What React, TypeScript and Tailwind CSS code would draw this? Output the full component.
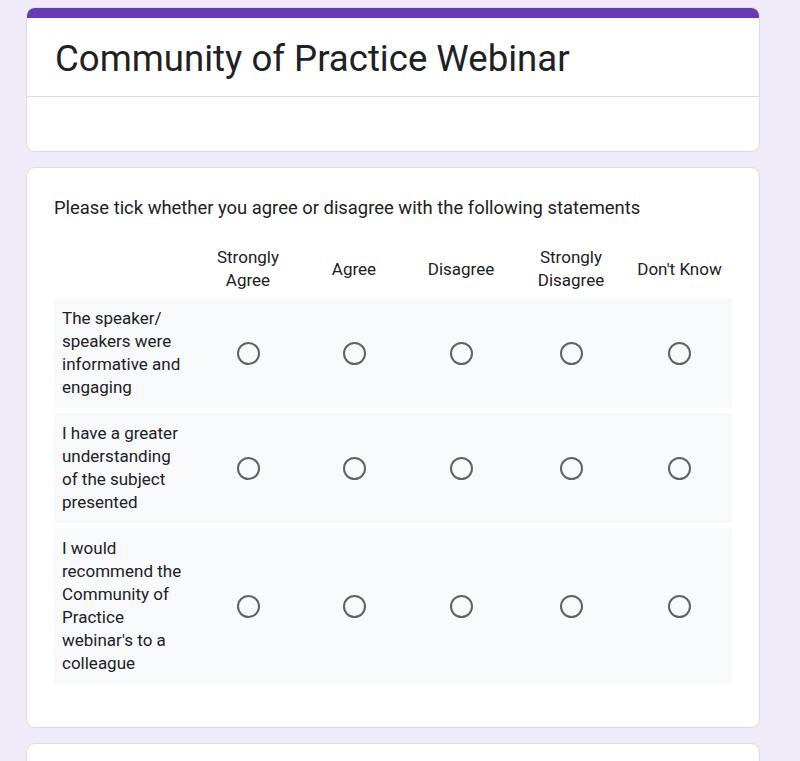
import React from "react";

const columns = [
  { label: ["Strongly", "Agree"], w: "w-[106px]" },
  { label: ["Agree"], w: "w-[106px]" },
  { label: ["Disagree"], w: "w-[108px]" },
  { label: ["Strongly", "Disagree"], w: "w-[112px]" },
  { label: ["Don't Know"], w: "w-[105px]" },
];

const rows: React.ReactNode[] = [
  <>
    The speaker/<wbr />speakers were informative and engaging
  </>,
  "I have a greater understanding of the subject presented",
  "I would recommend the Community of Practice webinar's to a colleague",
];

function Radio() {
  return <div className="w-[23px] h-[23px] rounded-full border-[2px] border-[#5f6368]" />;
}

export default function App() {
  return (
    <div
      className="min-h-screen bg-[#f0ebf8] pt-[7px] pl-[26px] text-[#202124] overflow-hidden"
      style={{ fontFamily: "Roboto, 'Liberation Sans', sans-serif" }}
    >
      <div className="w-[734px] flex flex-col gap-[15px]">
        {/* title card */}
        <div className="bg-white rounded-[9px] border border-[#dadce0] overflow-hidden">
          <div className="h-[11px] bg-[#673ab7] -mx-px -mt-px" />
          <div className="px-[28px] pt-[18px] pb-[14px] border-b border-[#dadce0]">
            <h1 className="text-[36.6px] leading-[46px] font-normal">Community of Practice Webinar</h1>
          </div>
          <div className="h-[54px]" />
        </div>

        {/* grid question */}
        <div className="bg-white rounded-[9px] border border-[#dadce0] pl-[27px] pr-[27px] pt-[26px] pb-[43px]">
          <p className="text-[18.4px] leading-[27px]">
            Please tick whether you agree or disagree with the following statements
          </p>

          <div className="mt-[25px] flex items-center h-[46px]">
            <div className="w-[141px] shrink-0" />
            {columns.map((c, i) => (
              <div key={i} className={`${c.w} shrink-0 text-center text-[17px] leading-[23px]`}>
                {c.label.map((l, j) => (
                  <div key={j}>{l}</div>
                ))}
              </div>
            ))}
          </div>

          <div className="mt-[6px] flex flex-col gap-[5px]">
            {rows.map((r, i) => (
              <div key={i} className="flex items-center bg-[#f8f9fa] rounded-[4px] py-[9px]">
                <div className="w-[141px] shrink-0 pl-[8px] pr-[11px] text-[17px] leading-[23px]">{r}</div>
                {columns.map((c, j) => (
                  <div key={j} className={`${c.w} shrink-0 flex justify-center`}>
                    <Radio />
                  </div>
                ))}
              </div>
            ))}
          </div>
        </div>

        {/* next card */}
        <div className="bg-white rounded-[9px] border border-[#dadce0] h-[120px]" />
      </div>
    </div>
  );
}
